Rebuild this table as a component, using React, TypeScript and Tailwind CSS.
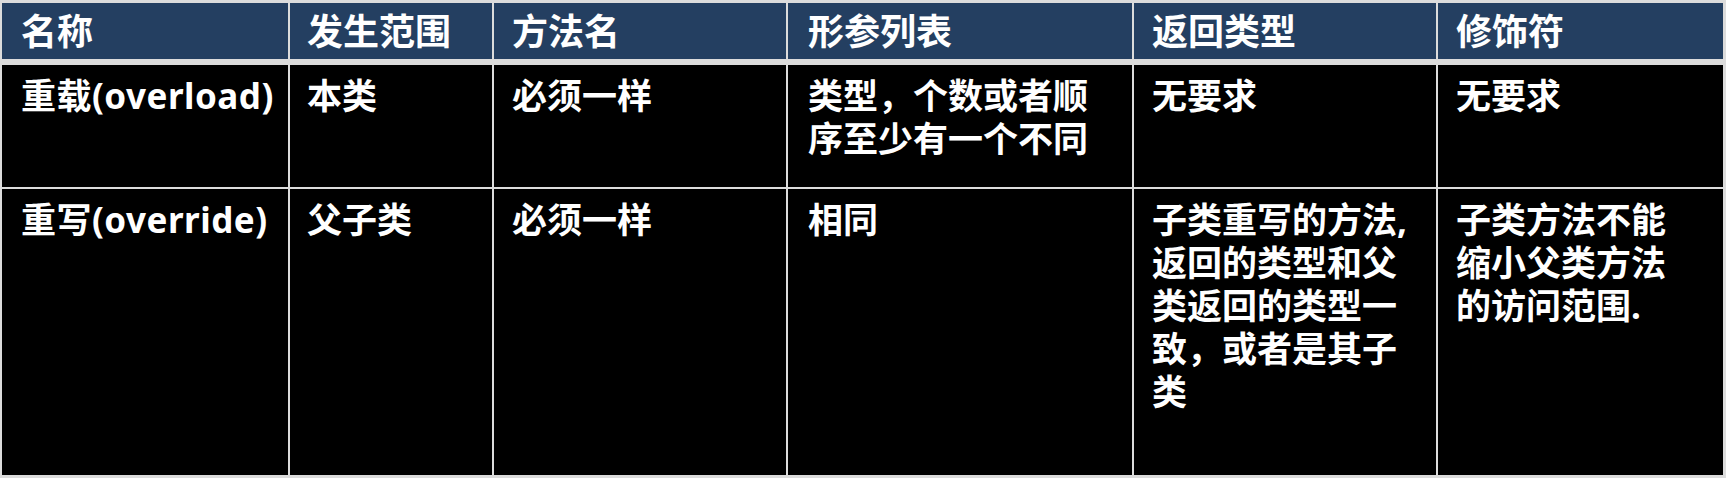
import React from 'react';

const headers = ['名称', '发生范围', '方法名', '形参列表', '返回类型', '修饰符'];

// per-column padding so that the wrapping matches the slide
const colPad = [
  'pl-[19px] pr-[4px] whitespace-nowrap',
  'pl-[17px] pr-[20px]',
  'pl-[18px] pr-[20px]',
  'pl-[20px] pr-[24px]',
  'pl-[18px] pr-[20px]',
  'pl-[18px] pr-[36px]'
];

const rows: string[][] = [
  ['重载(overload)', '本类', '必须一样', '类型，个数或者顺序至少有一个不同', '无要求', '无要求'],
  ['重写(override)', '父子类', '必须一样', '相同', '子类重写的方法,返回的类型和父类返回的类型一致，或者是其子类', '子类方法不能缩小父类方法的访问范围.']
];

const grid = 'grid grid-cols-[286px_202px_292px_344px_302px_285px] gap-x-[2px]';

export default function App() {
  return (
    <div className="w-[1726px] h-[478px] bg-[#dcdcdc] pt-[3px] pb-[3px] pl-[2px] pr-[3px] flex flex-col font-['Noto_Sans','Noto_Sans_CJK_SC',sans-serif] font-bold text-white">
      <div className={`${grid} h-[56px]`}>
        {headers.map((h, i) => (
          <div key={h} className={`bg-[#243f61] pt-[8px] text-[36px] leading-[42px] ${colPad[i]}`}>
            {h}
          </div>
        ))}
      </div>
      <div className={`${grid} mt-[6px] gap-y-[2px] grid-rows-[122px_286px]`}>
        {rows.map((row, r) =>
          row.map((c, i) => (
            <div
              key={`${r}-${i}`}
              className={`bg-black pt-[9px] text-[35px] leading-[43px] ${colPad[i]} ${i === 0 ? 'tracking-[0.5px]' : ''}`}
            >
              {c}
            </div>
          ))
        )}
      </div>
    </div>
  );
}
